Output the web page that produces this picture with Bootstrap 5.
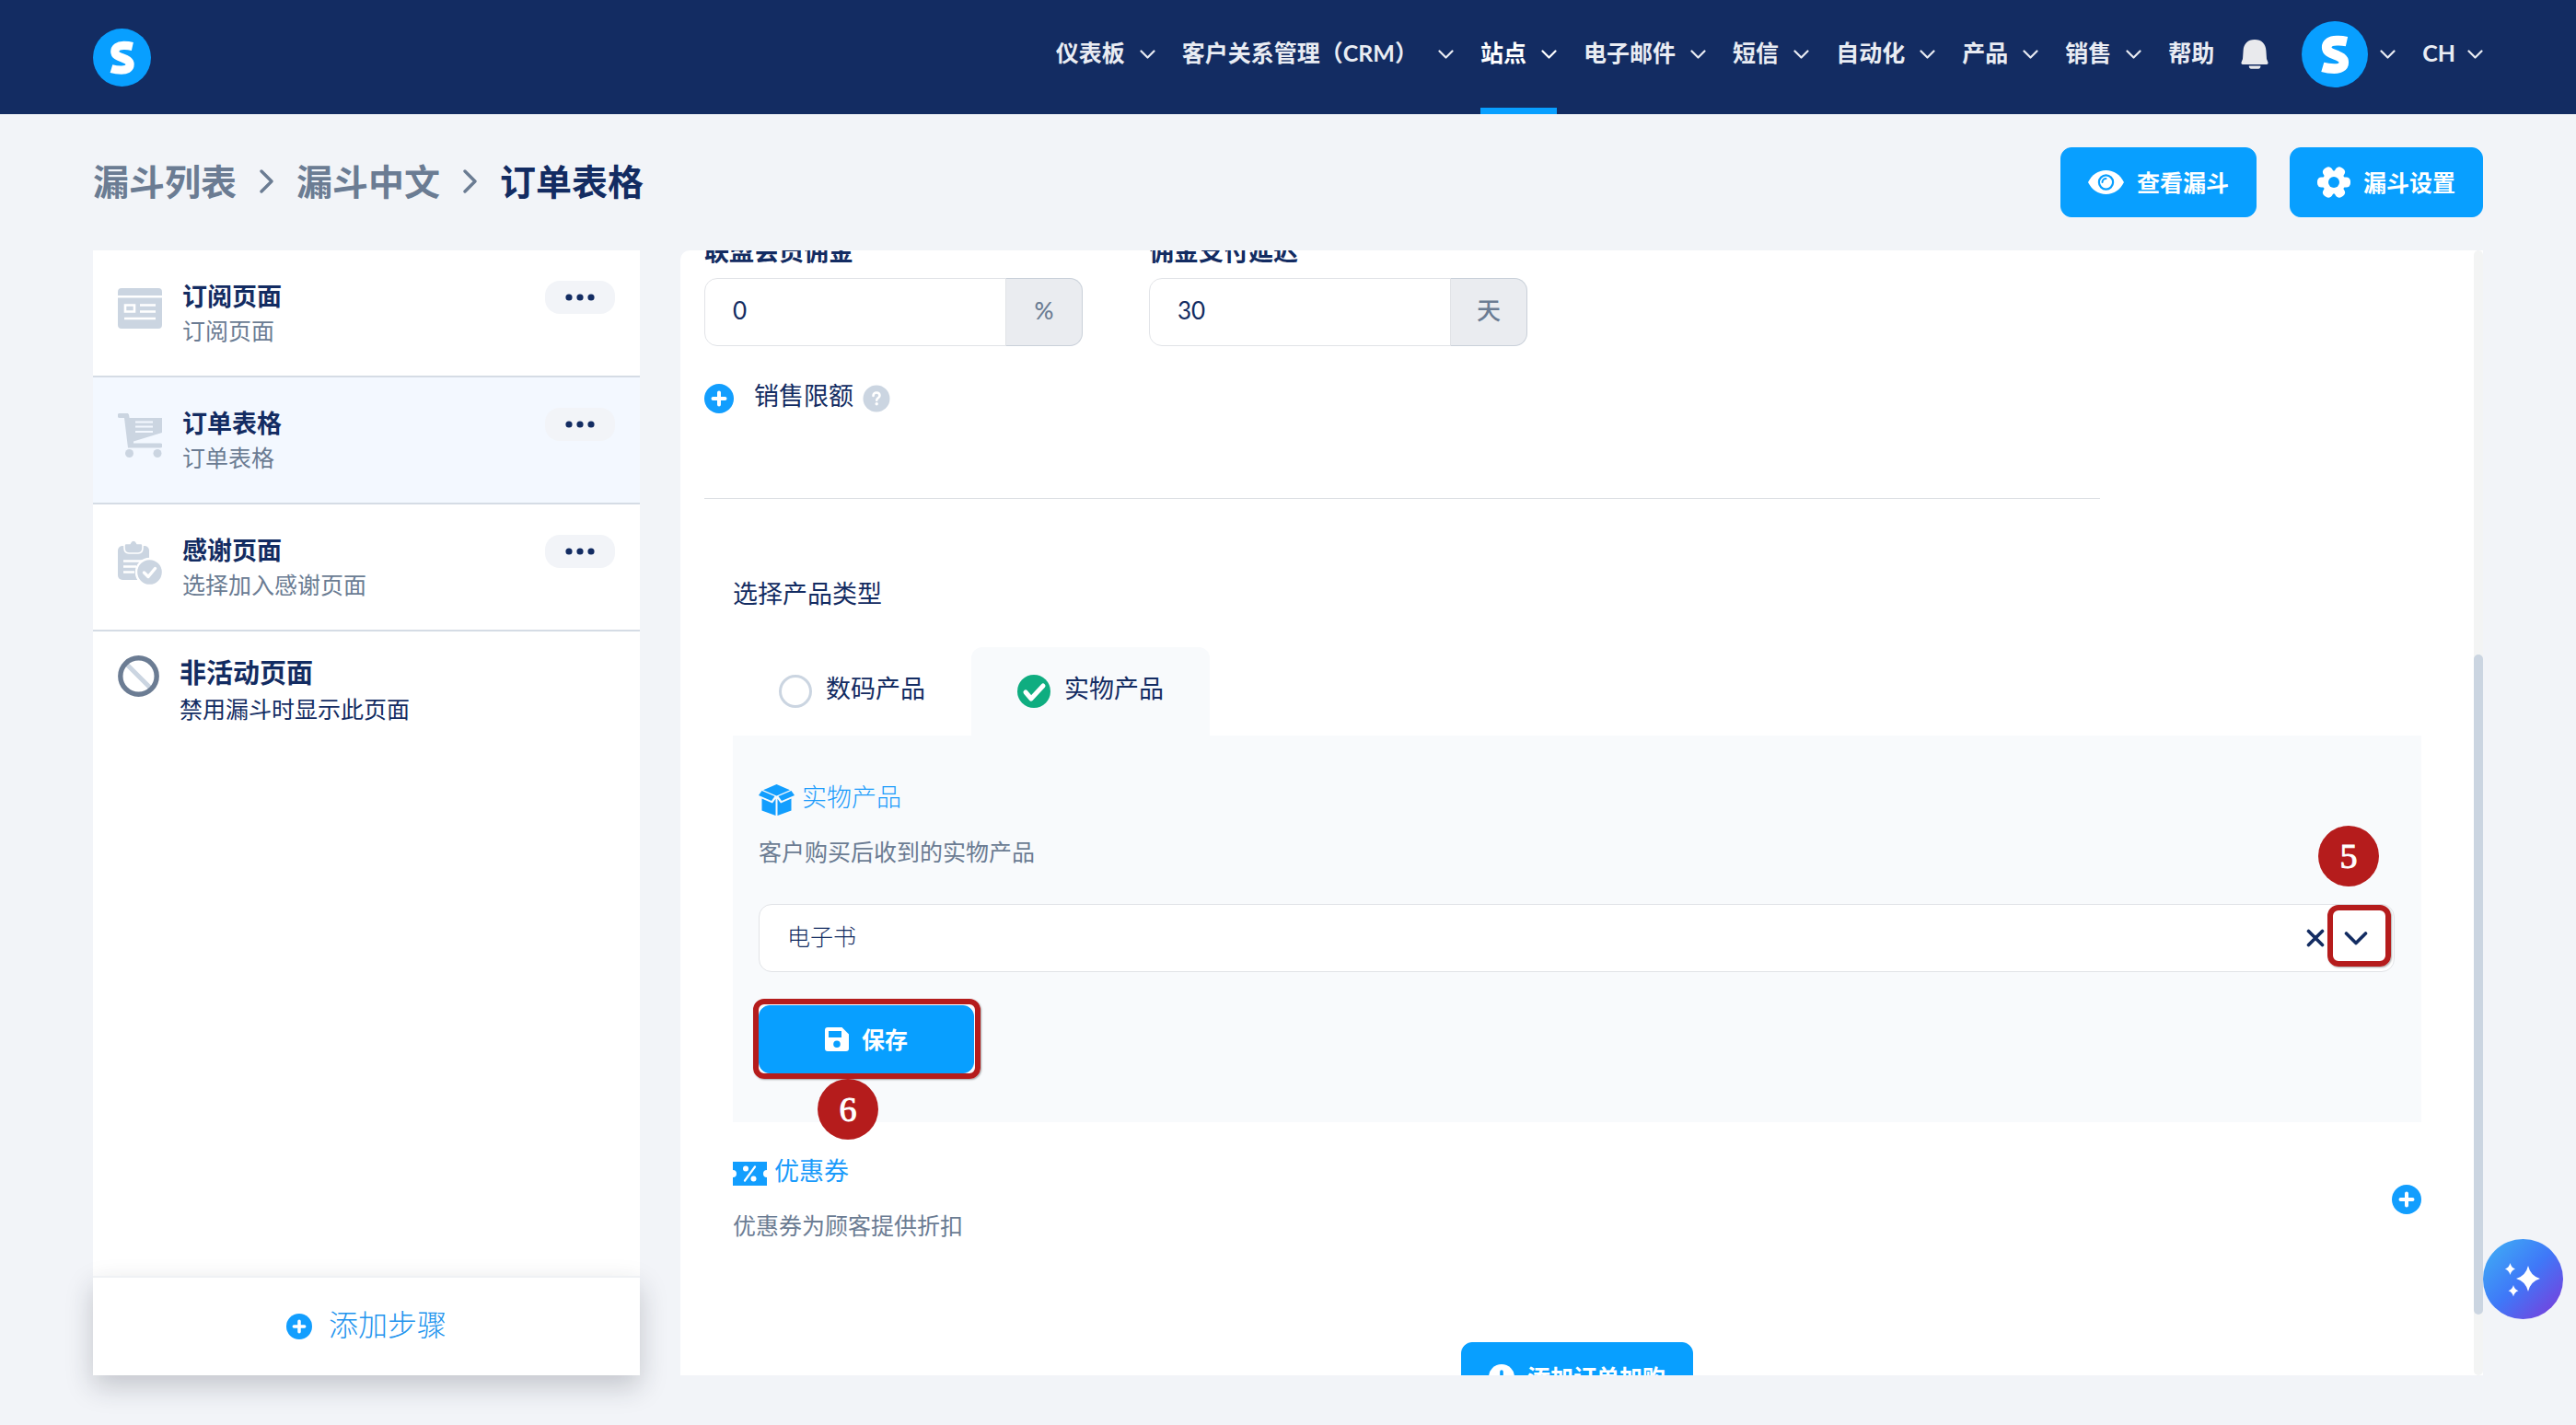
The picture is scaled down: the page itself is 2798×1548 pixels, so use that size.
<!DOCTYPE html>
<html lang="zh-CN">
<head>
<meta charset="utf-8">
<meta name="viewport" content="width=device-width, initial-scale=1">
<title>订单表格</title>
<link href="https://cdn.jsdelivr.net/npm/bootstrap@5.3.0/dist/css/bootstrap.min.css" rel="stylesheet">
<style>
:root{--navy:#132c62;--sky:#089fff;--slate:#6b7c93;--mist:#cbd5e1;--page:#f2f4f8;--red:#b51c1c}
body{background:var(--page);color:var(--navy);font-family:Lato,"Noto Sans CJK SC",sans-serif;font-size:25px;line-height:34px}
svg{display:block;flex:none}
a{text-decoration:none}
.gutter{padding-left:101px;padding-right:101px}
.topbar{background:var(--navy);height:124px;flex:none}
.main-nav{gap:29px;padding-bottom:10px}
.main-nav a{color:#e9ecf3;font-weight:700;gap:16px;position:relative}
.main-nav svg{margin-top:3px}
.main-nav a.active{color:#fff}
.main-nav a.active::after{content:"";position:absolute;left:0;right:0;bottom:-10px;height:7px;background:var(--sky)}
.main-nav a.bell{margin-right:7px;color:#e9eaed}
.main-nav a.tight{gap:13px}
.page-head{padding-top:36px;padding-bottom:36px;flex:none}
.head-actions{gap:36px}
.crumbs{font-size:39px;line-height:56px;font-weight:700;gap:25px;padding-bottom:2px}
.crumbs a{color:var(--slate)}
.btn-sky{--bs-btn-bg:var(--sky);--bs-btn-color:#fff;--bs-btn-border-color:var(--sky);--bs-btn-hover-bg:#0090ea;--bs-btn-hover-color:#fff;--bs-btn-padding-y:0;--bs-btn-padding-x:29px;--bs-btn-border-radius:12px;font-size:25px;line-height:34px;font-weight:700;height:76px;gap:14px}
.body-row{gap:44px;padding-bottom:54px;min-height:0}
.steps{width:594px;flex:none}
.step{height:138px;padding:33px 27px 0;border-bottom:2px solid #d5dce5;gap:22px}
.step.current{background:#f3f8ff}
.step svg.kind{margin-top:6px}
.step-name{font-size:27px;line-height:34px;font-weight:700}
.step-note{line-height:34px;color:var(--slate);margin-top:3px}
.dots{width:76px;height:36px;border:0;border-radius:16px;background:var(--page);padding:0}
.idle{padding:26px 27px 0;gap:22px}
.idle-name{font-size:29px;line-height:38px;font-weight:700;margin-bottom:3px}
.add-step{height:108px;background:#fff;border-top:2px solid #eff1f4;box-shadow:0 12px 28px rgba(30,35,50,.22);font-size:32px;line-height:40px;font-weight:300;color:#2294ee;gap:18px}
.add-step span{padding-bottom:4px}
.panel{border-radius:10px 0 0 0}
.panel-body{padding:0 57px 0 26px;min-width:0}
.rail{width:10px;flex:none;background:#f3f4f4;border-radius:5px}
.rail-top{flex:439 0 0}
.rail-thumb{flex:717 0 0;background:var(--mist);border-radius:5px}
.rail-end{flex:66 0 0}
.pair{gap:72px;margin-top:-16px}
.pair-item{width:411px}
.field-label{font-size:27px;line-height:34px;font-weight:700;margin-bottom:12px;white-space:nowrap}
.input-group{height:74px}
.input-group .form-control{color:var(--navy);font-size:26px;padding:0 30px 4px;border:1px solid #e1e3e7;border-radius:14px}
.input-group .input-group-text{width:84px;justify-content:center;background:#eaecf0;color:var(--slate);padding:0 0 4px;border:1px solid #c9d0d9;border-left-color:#dfe2e7;border-radius:14px;font-size:26px;font-weight:500}
.icon-row{min-height:34px}
.icon-text{font-size:27px;line-height:28px;padding-bottom:6px}
.limit{margin-top:40px}
.limit .icon-text{margin-left:22px;margin-right:10px}
.plain{border:0;background:none;padding:0}
.split{width:1516px;max-width:100%;margin:91px 0 86px;height:1px;background:#dcdfe3}
.product{margin-left:31px}
.type-title{font-size:27px;line-height:34px;margin:0 0 41px;font-weight:400}
.type-tab{height:96px;padding:0 50px;gap:15px;cursor:pointer;border-radius:12px 12px 0 0}
.type-tab.on,.type-box{background:#f8fafc}
.type-tab input{appearance:none;width:36px;height:36px;margin:0;border:3px solid var(--mist);border-radius:50%;background:#fff}
.type-tab input:checked{border:0;background:#0fad80 url("data:image/svg+xml,%3Csvg xmlns='http://www.w3.org/2000/svg' viewBox='0 0 36 36'%3E%3Cpath d='M9 19l6 7 13-14' fill='none' stroke='white' stroke-width='5' stroke-linecap='round' stroke-linejoin='round'/%3E%3C/svg%3E") center/36px}
.type-box{padding:53px 29px 53px 28px}
.tint{color:#1a9bfb}
.note{color:var(--slate);margin:22px 0 0}
.picker{margin-top:40px}
.picker select{appearance:none;width:100%;height:74px;border:1px solid #e1e3e7;border-radius:14px;background:#fff;padding:0 110px 5px 30px;font-size:25px;font-weight:300;color:var(--navy)}
.picker-tools{position:absolute;right:0;top:1px;gap:3px}
.picker-tools button{border:0;background:none;padding:4px 0 0}
.picker-tools .picker-open{width:69px;height:67px;margin-right:4px;position:relative}
.ring{position:absolute;border:6px solid var(--red);border-radius:12px;pointer-events:none;box-shadow:1px 1px 2px rgba(0,0,0,.35)}
.picker-open .ring{inset:0}
.save-wrap{margin-top:36px;width:234px}
.save-wrap .btn{height:74px;width:100%}
.save-wrap .ring{inset:-7px -7px -6px -6px}
.pin{position:absolute;width:66px;height:66px;border-radius:50%;background:var(--red);color:#fff;font-family:"Liberation Serif",serif;font-size:38px;line-height:66px;text-align:center;-webkit-text-stroke:1px #fff}
.pin-5{right:17px;top:-85px}
.pin-6{left:64px;top:80px}
.coupon{margin-top:39px}
.add-bump{margin:110px -57px 0 -57px}
.assist{position:fixed;right:14px;bottom:115px;width:87px;height:87px;border:0;border-radius:50%;background:linear-gradient(135deg,#3fa9f5 8%,#3f78f8 50%,#7a3ddb 95%);padding:0}
</style>
</head>
<body>
<svg class="d-none" aria-hidden="true">
  <symbol id="i-down" viewBox="0 0 17 10"><path d="M1.500 1.500l7 7 7-7" fill="none" stroke="currentColor" stroke-width="2.200" stroke-linecap="round" stroke-linejoin="round"/></symbol>
  <symbol id="i-next" viewBox="0 0 15 26"><path d="M2 2l11 11L2 24" fill="none" stroke="#6b7c93" stroke-width="3.400" stroke-linecap="round" stroke-linejoin="round"/></symbol>
  <symbol id="i-s" viewBox="0 0 72 72"><circle cx="36" cy="36" r="36" fill="#089fff"/><path d="M49 22.200c-4.500-1-8-1.200-11-1.100C31 21.300 27.200 24 27.200 28.500c0 4.500 4 6 9.300 8 5.500 2 9.300 3.800 9.300 8.200 0 5-4.500 6.900-10.500 6.900-4 0-8.500-.5-12.500-1.700" fill="none" stroke="#fff" stroke-width="10.600"/></symbol>
  <symbol id="i-plus" viewBox="0 0 32 32"><circle cx="16" cy="16" r="16" fill="#129efe"/><path d="M16 9.500v13M9.500 16h13" stroke="#fff" stroke-width="4" stroke-linecap="round"/></symbol>
  <symbol id="i-dots" viewBox="0 0 32 8"><g fill="#132c62"><circle cx="4" cy="4" r="3.600"/><circle cx="16" cy="4" r="3.600"/><circle cx="28" cy="4" r="3.600"/></g></symbol>
</svg>
<div class="d-flex flex-column vh-100 overflow-hidden">
<header class="topbar gutter d-flex justify-content-between">
  <a href="#" class="align-self-center" aria-label="首页"><svg width="63" height="63"><use href="#i-s"/></svg></a>
  <nav class="main-nav d-flex align-items-stretch">
    <a href="#" class="d-flex align-items-center">仪表板<svg width="17" height="10"><use href="#i-down"/></svg></a>
    <a href="#" class="d-flex align-items-center">客户关系管理（CRM）&nbsp;<svg width="17" height="10"><use href="#i-down"/></svg></a>
    <a href="#" class="d-flex align-items-center active">站点<svg width="17" height="10"><use href="#i-down"/></svg></a>
    <a href="#" class="d-flex align-items-center">电子邮件<svg width="17" height="10"><use href="#i-down"/></svg></a>
    <a href="#" class="d-flex align-items-center">短信<svg width="17" height="10"><use href="#i-down"/></svg></a>
    <a href="#" class="d-flex align-items-center">自动化<svg width="17" height="10"><use href="#i-down"/></svg></a>
    <a href="#" class="d-flex align-items-center">产品<svg width="17" height="10"><use href="#i-down"/></svg></a>
    <a href="#" class="d-flex align-items-center">销售<svg width="17" height="10"><use href="#i-down"/></svg></a>
    <a href="#" class="d-flex align-items-center">帮助</a>
    <a href="#" class="d-flex align-items-center bell" aria-label="通知"><svg width="30" height="32" viewBox="0 0 30 32"><path d="M15 0C7.500 0 3 4.500 2.600 12L2 21 .6 24.500C.1 26 .8 27 2 27h26c1.200 0 1.900-1 1.400-2.500L28 21l-.6-9C27 4.500 22.500 0 15 0z" fill="currentColor"/><path d="M8.800 28.500h12.600c.2 2-.8 3.200-2.400 3.200h-7.800c-1.600 0-2.600-1.200-2.400-3.200z" fill="currentColor"/></svg></a>
    <a href="#" class="d-flex align-items-center tight" aria-label="账户"><svg width="72" height="72"><use href="#i-s"/></svg><svg width="17" height="10"><use href="#i-down"/></svg></a>
    <a href="#" class="d-flex align-items-center tight">CH<svg width="17" height="10"><use href="#i-down"/></svg></a>
  </nav>
</header>

<div class="page-head gutter d-flex justify-content-between align-items-center">
  <nav class="crumbs d-flex align-items-center">
    <a href="#">漏斗列表</a><svg width="15" height="26"><use href="#i-next"/></svg>
    <a href="#">漏斗中文</a><svg width="15" height="26"><use href="#i-next"/></svg>
    <span>订单表格</span>
  </nav>
  <div class="head-actions d-flex">
    <button type="button" class="btn btn-sky d-flex align-items-center"><svg width="39" height="26" viewBox="0 0 39 26"><path d="M0 13C4 5 11 0 19.500 0S35 5 39 13c-4 8-11 13-19.500 13S4 21 0 13z" fill="#fff"/><circle cx="19.500" cy="13" r="7.600" fill="#fff" stroke="#089fff" stroke-width="2.200"/><path d="M15.500 13a4 4 0 0 1 4-4" fill="none" stroke="#089fff" stroke-width="2" stroke-linecap="round"/></svg>查看漏斗</button>
    <button type="button" class="btn btn-sky d-flex align-items-center"><svg width="36" height="36" viewBox="0 0 36 36"><g fill="#fff"><circle cx="18" cy="18" r="12.500"/><rect x="0" y="12.500" width="36" height="11" rx="4.500"/><rect x="0" y="12.500" width="36" height="11" rx="4.500" transform="rotate(60 18 18)"/><rect x="0" y="12.500" width="36" height="11" rx="4.500" transform="rotate(120 18 18)"/></g><circle cx="18" cy="18" r="6" fill="#089fff"/></svg>漏斗设置</button>
  </div>
</div>

<div class="body-row gutter d-flex flex-grow-1">
  <aside class="steps bg-white d-flex flex-column">
    <div class="step d-flex">
      <svg class="kind" width="48" height="48" viewBox="0 0 48 48"><path d="M4 2h40a4 4 0 0 1 4 4v4H0V6a4 4 0 0 1 4-4zM0 12.500h48V42a4 4 0 0 1-4 4H4a4 4 0 0 1-4-4z" fill="#cbd5e1"/><path d="M8 20.500h10v7H8zM24 20.500h17M24 27.500h17M7 35h34" fill="none" stroke="#fff" stroke-width="2.600"/></svg>
      <div class="flex-grow-1"><div class="step-name">订阅页面</div><div class="step-note">订阅页面</div></div>
      <button type="button" class="dots d-flex align-items-center justify-content-center" aria-label="更多"><svg width="32" height="8"><use href="#i-dots"/></svg></button>
    </div>
    <div class="step current d-flex">
      <svg class="kind" width="48" height="48" viewBox="0 0 48 48"><g fill="#cbd5e1"><path d="M2 0h8c1 0 1.800.6 2 1.500L12.600 5H48v16L17 30.500V32.500h29a2.500 2.500 0 0 1 0 5H11L7 5H2a2.500 2.500 0 0 1 0-5z"/><circle cx="12.500" cy="43.500" r="4.500"/><circle cx="43" cy="43.500" r="4.500"/></g><path d="M19 9.500h19M19 14.500h19M19 20h19" stroke="#f3f8ff" stroke-width="2.200"/></svg>
      <div class="flex-grow-1"><div class="step-name">订单表格</div><div class="step-note">订单表格</div></div>
      <button type="button" class="dots d-flex align-items-center justify-content-center" aria-label="更多"><svg width="32" height="8"><use href="#i-dots"/></svg></button>
    </div>
    <div class="step d-flex">
      <svg class="kind" width="48" height="48" viewBox="0 0 48 48"><path d="M5 6h24a5 5 0 0 1 5 5v27a5 5 0 0 1-5 5H5a5 5 0 0 1-5-5V11a5 5 0 0 1 5-5z" fill="#cbd5e1"/><path d="M6 22.500h20M6 28.500h14M6 34.500h12" stroke="#fff" stroke-width="2.400"/><path d="M9 3.500h4C14 1 15.500 0 17 0s3 1 4 3.500h4c1.500 0 2 .8 2 2V8c0 4-2 6-5 6H12c-3 0-5-2-5-6V5.500c0-1.200.5-2 2-2z" fill="#cbd5e1" stroke="#fff" stroke-width="1.600"/><circle cx="34.500" cy="34.500" r="14.500" fill="#cbd5e1" stroke="#fff" stroke-width="2.400"/><path d="M28.500 35l4.500 4.500 7.500-9" fill="none" stroke="#fff" stroke-width="3.400" stroke-linecap="round" stroke-linejoin="round"/></svg>
      <div class="flex-grow-1"><div class="step-name">感谢页面</div><div class="step-note">选择加入感谢页面</div></div>
      <button type="button" class="dots d-flex align-items-center justify-content-center" aria-label="更多"><svg width="32" height="8"><use href="#i-dots"/></svg></button>
    </div>
    <div class="idle d-flex flex-grow-1">
      <svg width="45" height="45" viewBox="0 0 45 45"><path d="M10 10l25 25" stroke="#cbd5e1" stroke-width="5"/><circle cx="22.500" cy="22.500" r="19.700" fill="none" stroke="#6b7c93" stroke-width="5.400"/></svg>
      <div><div class="idle-name">非活动页面</div><div>禁用漏斗时显示此页面</div></div>
    </div>
    <a href="#" class="add-step d-flex align-items-center justify-content-center"><svg width="28" height="28"><use href="#i-plus"/></svg><span>添加步骤</span></a>
  </aside>

  <main class="panel bg-white d-flex flex-grow-1 overflow-hidden">
    <div class="panel-body flex-grow-1">
      <div class="pair d-flex">
        <div class="pair-item">
          <label class="field-label d-block" for="commission">联盟会员佣金</label>
          <div class="input-group"><input id="commission" type="text" class="form-control" value="0"><span class="input-group-text">%</span></div>
        </div>
        <div class="pair-item">
          <label class="field-label d-block" for="delay">佣金支付延迟</label>
          <div class="input-group"><input id="delay" type="text" class="form-control" value="30"><span class="input-group-text">天</span></div>
        </div>
      </div>
      <div class="limit icon-row d-flex align-items-center">
        <button type="button" class="plain" aria-label="添加销售限额"><svg width="32" height="32"><use href="#i-plus"/></svg></button>
        <span class="icon-text">销售限额</span>
        <svg width="30" height="30" viewBox="0 0 30 30"><circle cx="15" cy="15" r="14.500" fill="#cbd5e1"/><path d="M11.500 12c0-2.200 1.500-3.500 3.500-3.500s3.500 1.200 3.500 3.200c0 2.500-3.300 2.600-3.300 5" fill="none" stroke="#fff" stroke-width="2.600" stroke-linecap="round"/><circle cx="15.200" cy="20.800" r="1.700" fill="#fff"/></svg>
      </div>
      <div class="split"></div>

      <section class="product">
        <h2 class="type-title">选择产品类型</h2>
        <div class="d-flex">
          <label class="type-tab d-flex align-items-center"><input type="radio" name="kind"><span class="icon-text">数码产品</span></label>
          <label class="type-tab on d-flex align-items-center"><input type="radio" name="kind" checked><span class="icon-text">实物产品</span></label>
        </div>
        <div class="type-box">
          <div class="icon-row d-flex align-items-center tint">
            <svg width="39" height="34" viewBox="0 0 39 34"><g fill="#129efe"><path d="M19.500 0L34 6.200 19.500 12.400 5 6.200z"/><path d="M3.500 7L17.500 13 14 18 0 12z"/><path d="M35.500 7L21.500 13 25 18 39 12z"/><path d="M3.500 15.500L15 20.500l3.500-4.800V34L3.500 28.500z"/><path d="M35.500 15.500L24 20.500l-3.500-4.800V34l15-5.500z"/></g></svg>
            <span class="icon-text ms-2 fw-light">实物产品</span>
          </div>
          <p class="note">客户购买后收到的实物产品</p>
          <div class="picker position-relative">
            <select aria-label="实物产品"><option>电子书</option></select>
            <div class="picker-tools d-flex align-items-center">
              <button type="button" aria-label="清除"><svg width="20" height="20" viewBox="0 0 20 20"><path d="M2.500 2.500l15 15M17.500 2.500l-15 15" stroke="#132c62" stroke-width="3.600" stroke-linecap="round"/></svg></button>
              <button type="button" class="picker-open" aria-label="展开"><svg class="mx-auto" width="33" height="16" viewBox="0 0 33 16"><path d="M2.500 3l10.500 10.500L23.500 3" fill="none" stroke="#132c62" stroke-width="3.600" stroke-linecap="round" stroke-linejoin="round"/></svg><span class="ring"></span></button>
            </div>
            <span class="pin pin-5">5</span>
          </div>
          <div class="save-wrap position-relative">
            <button type="button" class="btn btn-sky d-flex align-items-center justify-content-center"><svg width="26" height="26" viewBox="0 0 26 26"><path fill-rule="evenodd" d="M3 0h15.500L26 7.500V23a3 3 0 0 1-3 3H3a3 3 0 0 1-3-3V3a3 3 0 0 1 3-3zM4 4v7h14V4zM13 14.500a3.800 3.800 0 1 0 0 7.600 3.800 3.800 0 0 0 0-7.600z" fill="#fff"/></svg>保存</button>
            <span class="ring"></span>
            <span class="pin pin-6">6</span>
          </div>
        </div>
        <div class="coupon d-flex justify-content-between align-items-center">
          <div>
            <div class="icon-row d-flex align-items-center tint">
              <svg width="37" height="26" viewBox="0 0 37 26"><path d="M0 0h37v9a4 4 0 0 0 0 8v9H0v-9a4 4 0 0 0 0-8z" fill="#129efe"/><path d="M24 5.500L13 20.500" stroke="#fff" stroke-width="2.200" stroke-linecap="round"/><circle cx="14" cy="7.500" r="3" fill="#fff"/><circle cx="22.500" cy="18.500" r="3" fill="#fff"/></svg>
              <span class="icon-text ms-2">优惠券</span>
            </div>
            <p class="note">优惠券为顾客提供折扣</p>
          </div>
          <button type="button" class="plain" aria-label="添加优惠券"><svg width="32" height="32"><use href="#i-plus"/></svg></button>
        </div>
        <div class="add-bump d-flex justify-content-center">
          <button type="button" class="btn btn-sky d-flex align-items-center"><svg width="28" height="28" viewBox="0 0 28 28"><circle cx="14" cy="14" r="14" fill="#fff"/><path d="M14 8v12M8 14h12" stroke="#089fff" stroke-width="3.600" stroke-linecap="round"/></svg>添加订单加购</button>
        </div>
      </section>
    </div>
    <div class="rail d-flex flex-column" aria-hidden="true"><div class="rail-top"></div><div class="rail-thumb"></div><div class="rail-end"></div></div>
  </main>
</div>
</div>
<button type="button" class="assist" aria-label="助手"><svg width="87" height="87" viewBox="0 0 87 87" fill="#fff"><path d="M49 29q2.500 11 13 14-10.500 3-13 14-2.500-11-13-14 10.500-3 13-14zM29.500 26q1.200 5 5.500 6.500-4.300 1.500-5.500 6.500-1.200-5-5.500-6.500 4.300-1.500 5.500-6.500zM33 50q1.200 5 5.500 6.200-4.300 1.200-5.500 6.200-1.200-5-5.500-6.200 4.300-1.200 5.500-6.200z"/></svg></button>
<script src="https://cdn.jsdelivr.net/npm/bootstrap@5.3.0/dist/js/bootstrap.bundle.min.js"></script>
</body>
</html>
